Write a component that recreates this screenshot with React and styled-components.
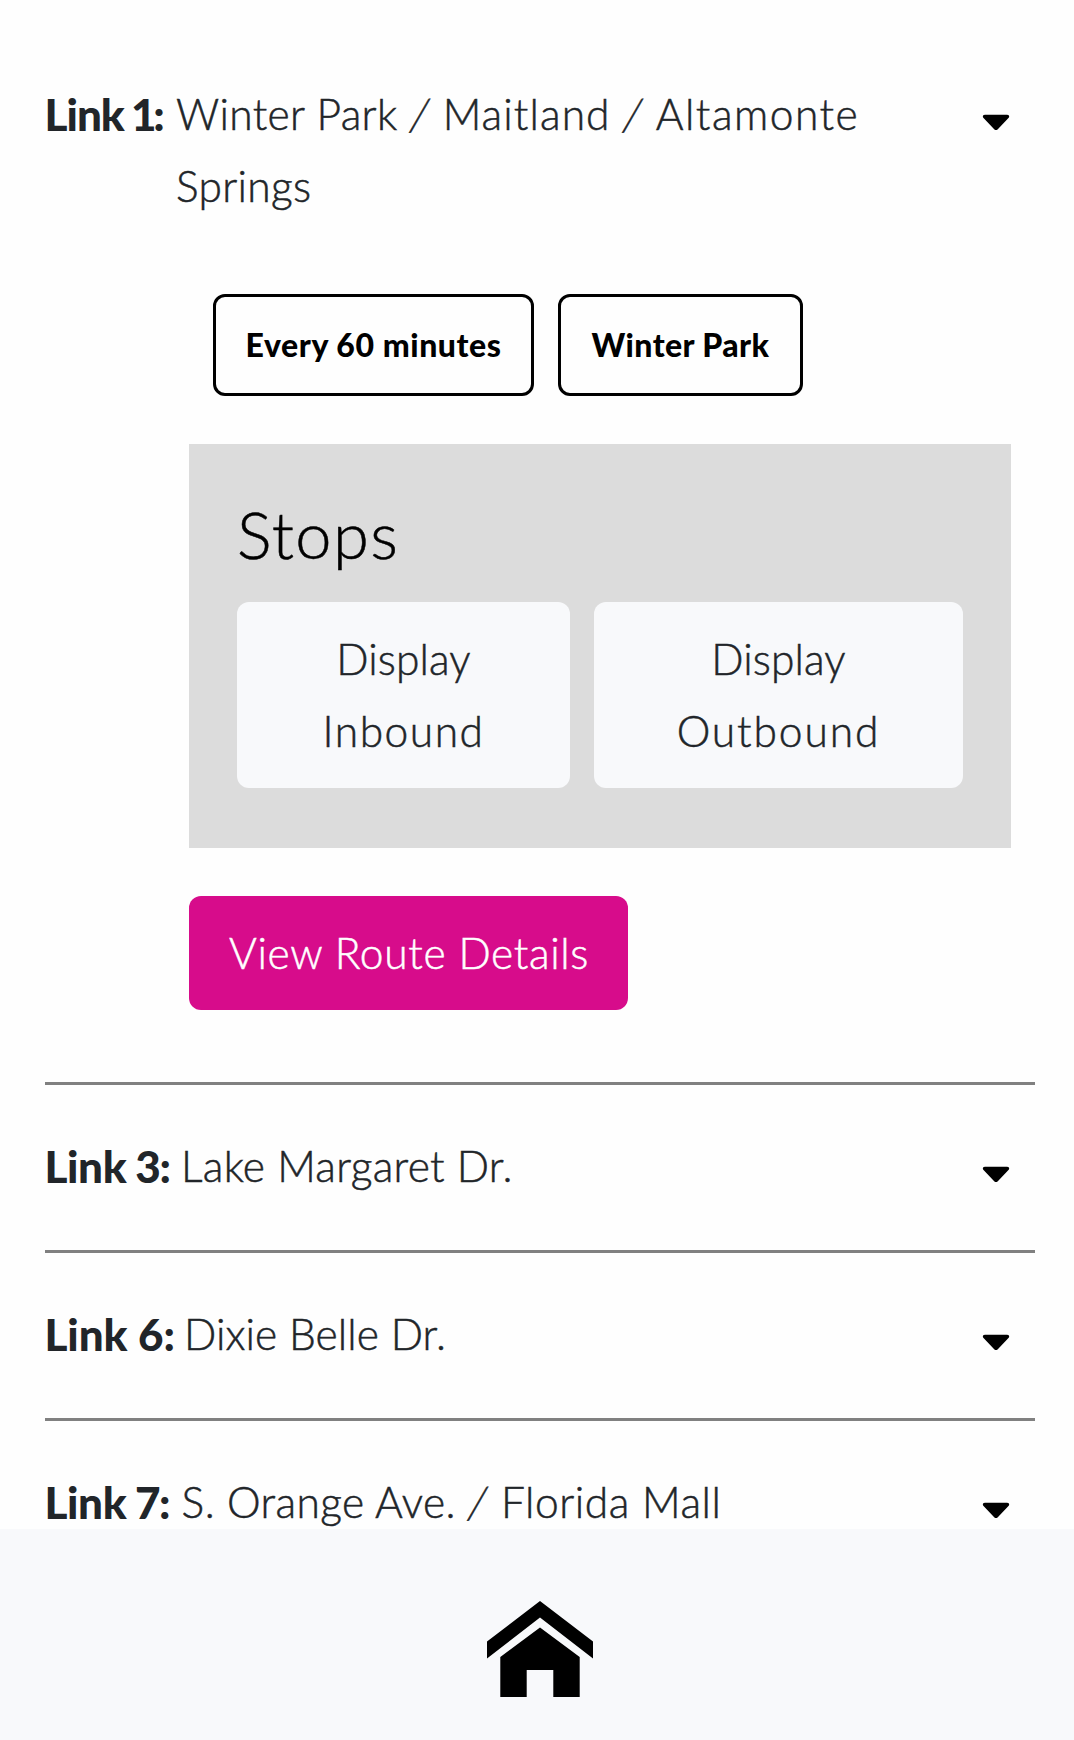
import React, { Fragment } from "react";
import styled, { createGlobalStyle } from "styled-components";

const GlobalStyle = createGlobalStyle`
  *, *::before, *::after { box-sizing: border-box; }
  body {
    margin: 0;
    overflow: hidden;
    background: #fefefe;
    color: #212529;
    font-family: Lato, "Liberation Sans", sans-serif;
    font-size: 42.5px;
    font-weight: 300;
    line-height: 72px;
  }
  button { font: inherit; color: inherit; border: 0; margin: 0; cursor: pointer; }
`;

const Screen = styled.div`
  display: flex;
  flex-direction: column;
  height: 1740px;
  overflow: hidden;
`;

const RouteList = styled.main`
  flex: 1;
  min-height: 0;
  overflow: hidden;
  padding: 33px 39px 0 45px;
`;

const Route = styled.section`
  border-bottom: 3px solid #808080;
`;

const RouteHeader = styled.header`
  display: flex;
  align-items: flex-start;
  padding: 45px 25px 48px 0;
`;

const RouteNumber = styled.strong`
  flex: none;
  width: ${(p) => p.$width}px;
  text-indent: -0.5px;
  font-size: 44px;
  font-weight: 900;
  letter-spacing: ${(p) => p.$spacing}px;
  white-space: nowrap;
`;

const Digit = styled.span`
  letter-spacing: ${(p) => p.$spacing}px;
`;

const Label = styled.span`
  display: block;
  letter-spacing: ${(p) => p.$spacing || 0}px;
  -webkit-text-stroke: 0.5px currentColor;
  white-space: nowrap;
`;

const Segment = styled.span`
  letter-spacing: ${(p) => p.$spacing}px;
`;

const Slash = styled.span`
  display: inline-block;
  width: 22px;
  text-align: center;
  transform: skewX(-10deg) scaleY(1.04);
`;

const RouteName = styled.div`
  flex: 1;
`;

const Caret = styled.svg`
  flex: none;
  width: 28px;
  height: 17px;
  margin-top: 36px;
`;

const RouteBody = styled.div`
  display: flex;
  flex-direction: column;
  align-items: flex-start;
  padding: 24px 24px 72px 144px;
`;

const Tags = styled.div`
  display: flex;
  gap: 24px;
  padding-left: 24px;
  margin-bottom: 48px;
`;

const Tag = styled.span`
  width: ${(p) => p.$width}px;
  height: 102px;
  border: 3px solid #000;
  border-radius: 12px;
  color: #000;
  font-size: 32px;
  font-weight: 900;
  line-height: 96px;
  letter-spacing: ${(p) => p.$spacing}px;
  text-align: center;
  white-space: nowrap;
`;

const StopsPanel = styled.div`
  align-self: stretch;
  height: 404px;
  padding: 51px 48px 0;
  margin-bottom: 48px;
  background: #dcdcdc;
`;

const StopsTitle = styled.h2`
  margin: 0 0 29px;
  color: #000;
  font-size: 65px;
  font-weight: 300;
  line-height: 78px;
`;

const StopButtons = styled.div`
  display: flex;
  gap: 24px;
`;

const StopButton = styled.button`
  flex: ${(p) => p.$grow} 0 0;
  height: 186px;
  padding: 0;
  border-radius: 12px;
  background: #f8f9fb;
`;

const DetailsButton = styled.button`
  width: 439px;
  height: 114px;
  padding: 0 0 0 40px;
  border-radius: 12px;
  background: #d70c8b;
  color: #fff;
  text-align: left;
`;

const BottomBar = styled.nav`
  flex: none;
  display: flex;
  justify-content: center;
  height: 211px;
  padding: 72px 0 0 6px;
  background: #f8f9fb;
`;

const HomeIcon = styled.svg`
  width: 106px;
  height: 96px;
`;

const routes = [
  {
    number: 1, width: 131, spacing: -1, digitSpacing: -3.3, open: true,
    lines: [
      [["Winter Park", 0.35], ["Maitland", 1.1], ["Altamonte", 1.5]],
      [["Springs", 0.3]],
    ],
  },
  { number: 3, width: 136, spacing: -0.4, digitSpacing: -1.4, lines: [[["Lake Margaret Dr.", 0.3]]] },
  { number: 6, width: 139, spacing: -0.1, digitSpacing: 0, lines: [[["Dixie Belle Dr.", 0.1]]] },
  {
    number: 7, width: 136.5, spacing: -0.4, digitSpacing: -1.6,
    lines: [[["S. Orange Ave.", 0.4], ["Florida Mall", 0.55]]],
  },
];

function CaretDown() {
  return (
    <Caret viewBox="0 0 28 17" aria-hidden="true">
      <path d="M2.8 .7H25.2Q27.3 .7 27.2 2.4Q27.2 3.3 26 4.4L15.8 15.2Q14 17 12.2 15.2L2 4.4Q.8 3.3 .8 2.4Q.7 .7 2.8 .7Z" />
    </Caret>
  );
}

function RouteDetails() {
  return (
    <RouteBody>
      <Tags>
        <Tag $width={321} $spacing={0.56}>Every 60 minutes</Tag>
        <Tag $width={245} $spacing={0.4}>Winter Park</Tag>
      </Tags>
      <StopsPanel>
        <StopsTitle><Label $spacing={1.4}>Stops</Label></StopsTitle>
        <StopButtons>
          <StopButton $grow={333}>
            <Label $spacing={0.1}>Display</Label>
            <Label $spacing={1.5}>Inbound</Label>
          </StopButton>
          <StopButton $grow={369}>
            <Label $spacing={0.1}>Display</Label>
            <Label $spacing={1.9}>Outbound</Label>
          </StopButton>
        </StopButtons>
      </StopsPanel>
      <DetailsButton><Label $spacing={0.65}>View Route Details</Label></DetailsButton>
    </RouteBody>
  );
}

export default function App() {
  return (
    <Screen>
      <GlobalStyle />
      <RouteList>
        {routes.map((route) => (
          <Route key={route.number}>
            <RouteHeader>
              <RouteNumber $width={route.width} $spacing={route.spacing}>
                Link<Digit $spacing={route.digitSpacing}>{` ${route.number}:`}</Digit>
              </RouteNumber>
              <RouteName>
                {route.lines.map((line, i) => (
                  <Label key={i}>
                    {line.map(([text, spacing], j) => (
                      <Fragment key={text}>
                        {j > 0 && <> <Slash>/</Slash> </>}
                        <Segment $spacing={spacing}>{text}</Segment>
                      </Fragment>
                    ))}
                  </Label>
                ))}
              </RouteName>
              <CaretDown />
            </RouteHeader>
            {route.open && <RouteDetails />}
          </Route>
        ))}
      </RouteList>
      <BottomBar>
        <HomeIcon viewBox="0 0 106 96" role="img" aria-label="Home">
          <path d="M53 0L106 40.5V57.5L53 16.5L0 57.5V40.5Z" />
          <path d="M53 26.5L92.7 56V96H66.3V69H39.7V96H13.3V56Z" />
        </HomeIcon>
      </BottomBar>
    </Screen>
  );
}
